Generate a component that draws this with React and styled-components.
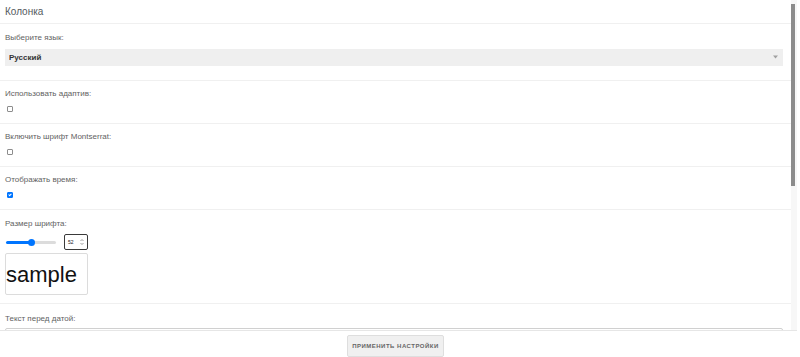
import styled, { createGlobalStyle } from 'styled-components';
import { useState } from 'react';

const GlobalStyle = createGlobalStyle`
  html, body {
    margin: 0;
    padding: 0;
    background: #ffffff;
    font-family: "Liberation Sans", Arial, sans-serif;
    overflow: hidden;
  }
`;

const Page = styled.div`
  width: 797px;
  height: 357px;
  display: flex;
  flex-direction: column;
`;

const Body = styled.div`
  height: 331px;
  display: flex;
  border-bottom: 1px solid #e6e6e6;
  box-sizing: border-box;
`;

const Scroller = styled.div`
  flex: 1;
  overflow: hidden;
`;

const ScrollTrack = styled.div`
  width: 6px;
  background: #f7f7f7;
  padding-top: 4px;
  box-sizing: border-box;
`;

const ScrollThumb = styled.div`
  width: 4px;
  height: 182px;
  background: #8c8c8c;
`;

const Header = styled.div`
  padding: 5px 5px;
  font-size: 10px;
  line-height: 13px;
  color: #555a60;
  border-bottom: 1px solid #f0f0f0;
`;

const Section = styled.div`
  display: flex;
  flex-direction: column;
  align-items: flex-start;
  padding: ${(p) => p.$pad || '7px 8px 11px 5px'};
  border-bottom: 1px solid #f0f0f0;
`;

const Label = styled.label`
  font-size: 8px;
  line-height: 11px;
  color: #626262;
  margin-bottom: ${(p) => p.$gap || 7}px;
`;

const SelectWrap = styled.div`
  position: relative;
  align-self: stretch;
  display: flex;
`;

const Select = styled.select`
  appearance: none;
  flex: 1;
  height: 17px;
  border: none;
  border-radius: 0;
  background: #efefef;
  padding: 0 4px;
  font-family: "Liberation Sans", Arial, sans-serif;
  font-size: 8px;
  font-weight: 700;
  color: #333;
  outline: none;
`;

const Caret = styled.svg`
  position: absolute;
  right: 5px;
  top: 6px;
  pointer-events: none;
`;

const Check = styled.input.attrs({ type: 'checkbox' })`
  appearance: none;
  position: relative;
  width: 6px;
  height: 6px;
  margin: 0 0 0 2px;
  box-sizing: border-box;
  border: 1px solid #8d8d8d;
  border-radius: 1px;
  background: #fff;
  &:checked {
    background: #0075ff;
    border-color: #0075ff;
  }
  &:checked::after {
    content: '';
    position: absolute;
    left: 1px;
    top: 0;
    width: 1px;
    height: 2px;
    border: solid #fff;
    border-width: 0 1px 1px 0;
    transform: rotate(45deg);
  }
`;

const SliderRow = styled.div`
  display: flex;
  align-items: center;
  gap: 8px;
  margin-bottom: 3px;
`;

const Range = styled.input.attrs({ type: 'range' })`
  appearance: none;
  width: 50px;
  height: 3px;
  margin: 0 0 0 1px;
  border-radius: 2px;
  background: linear-gradient(to right, #0075ff 0, #0075ff ${(p) => p.$pct}%, #dcdcdc ${(p) => p.$pct}%, #dcdcdc 100%);
  &::-webkit-slider-thumb {
    appearance: none;
    width: 7px;
    height: 7px;
    border-radius: 50%;
    background: #0075ff;
    border: none;
  }
`;

const NumberBox = styled.div`
  width: 24px;
  height: 16px;
  box-sizing: border-box;
  border: 1px solid #3a3a3a;
  border-radius: 2px;
  display: flex;
  align-items: center;
  justify-content: space-between;
  padding: 0 3px 0 3px;
  font-size: 5px;
  color: #222;
`;

const Sample = styled.div`
  width: 83px;
  height: 42px;
  box-sizing: border-box;
  border: 1px solid #dcdcdc;
  border-radius: 2px;
  display: flex;
  align-items: center;
  font-size: 22px;
  line-height: 22px;
  color: #111;
  padding-top: 1px;
`;

const TextInput = styled.input`
  align-self: stretch;
  height: 18px;
  box-sizing: border-box;
  border: 1px solid #d0d0d0;
  border-radius: 2px;
  font-size: 8px;
`;

const Footer = styled.div`
  flex: 1;
  display: flex;
  justify-content: center;
  align-items: flex-start;
  padding: 4px 6px 0 0;
`;

const ApplyButton = styled.button`
  width: 97px;
  height: 22px;
  background: #f0f0f0;
  border: 1px solid #dedede;
  border-radius: 2px;
  font-family: "Liberation Sans", Arial, sans-serif;
  font-size: 6px;
  font-weight: 700;
  letter-spacing: 0.5px;
  text-transform: uppercase;
  color: #666;
  padding: 0;
`;

export default function App() {
  const [size, setSize] = useState(52);
  const [adaptive, setAdaptive] = useState(false);
  const [montserrat, setMontserrat] = useState(false);
  const [showTime, setShowTime] = useState(true);

  return (
    <Page>
      <GlobalStyle />
      <Body>
        <Scroller>
          <Header>Колонка</Header>
          <Section $pad="8px 8px 14px 5px">
            <Label $gap={6}>Выберите язык:</Label>
            <SelectWrap>
              <Select defaultValue="ru">
                <option value="ru">Русский</option>
              </Select>
              <Caret width="5" height="4" viewBox="0 0 5 4">
                <path d="M0 0.5h5L2.5 3.5z" fill="#a0a0a0" />
              </Caret>
            </SelectWrap>
          </Section>
          <Section>
            <Label>Использовать адаптив:</Label>
            <Check checked={adaptive} onChange={(e) => setAdaptive(e.target.checked)} />
          </Section>
          <Section>
            <Label>Включить шрифт Montserrat:</Label>
            <Check checked={montserrat} onChange={(e) => setMontserrat(e.target.checked)} />
          </Section>
          <Section>
            <Label>Отображать время:</Label>
            <Check checked={showTime} onChange={(e) => setShowTime(e.target.checked)} />
          </Section>
          <Section $pad="8px 8px 8px 5px">
            <Label $gap={5}>Размер шрифта:</Label>
            <SliderRow>
              <Range
                min={0}
                max={100}
                value={size}
                $pct={size}
                onChange={(e) => setSize(Number(e.target.value))}
              />
              <NumberBox>
                <span>{size}</span>
                <svg width="4" height="8" viewBox="0 0 4 8">
                  <path d="M0.5 3L2 1.5L3.5 3M0.5 5L2 6.5L3.5 5" fill="none" stroke="#777" strokeWidth="0.7" />
                </svg>
              </NumberBox>
            </SliderRow>
            <Sample>sample</Sample>
          </Section>
          <Section $pad="9px 8px 12px 5px">
            <Label $gap={4}>Текст перед датой:</Label>
            <TextInput type="text" />
          </Section>
        </Scroller>
        <ScrollTrack>
          <ScrollThumb />
        </ScrollTrack>
      </Body>
      <Footer>
        <ApplyButton>Применить настройки</ApplyButton>
      </Footer>
    </Page>
  );
}
